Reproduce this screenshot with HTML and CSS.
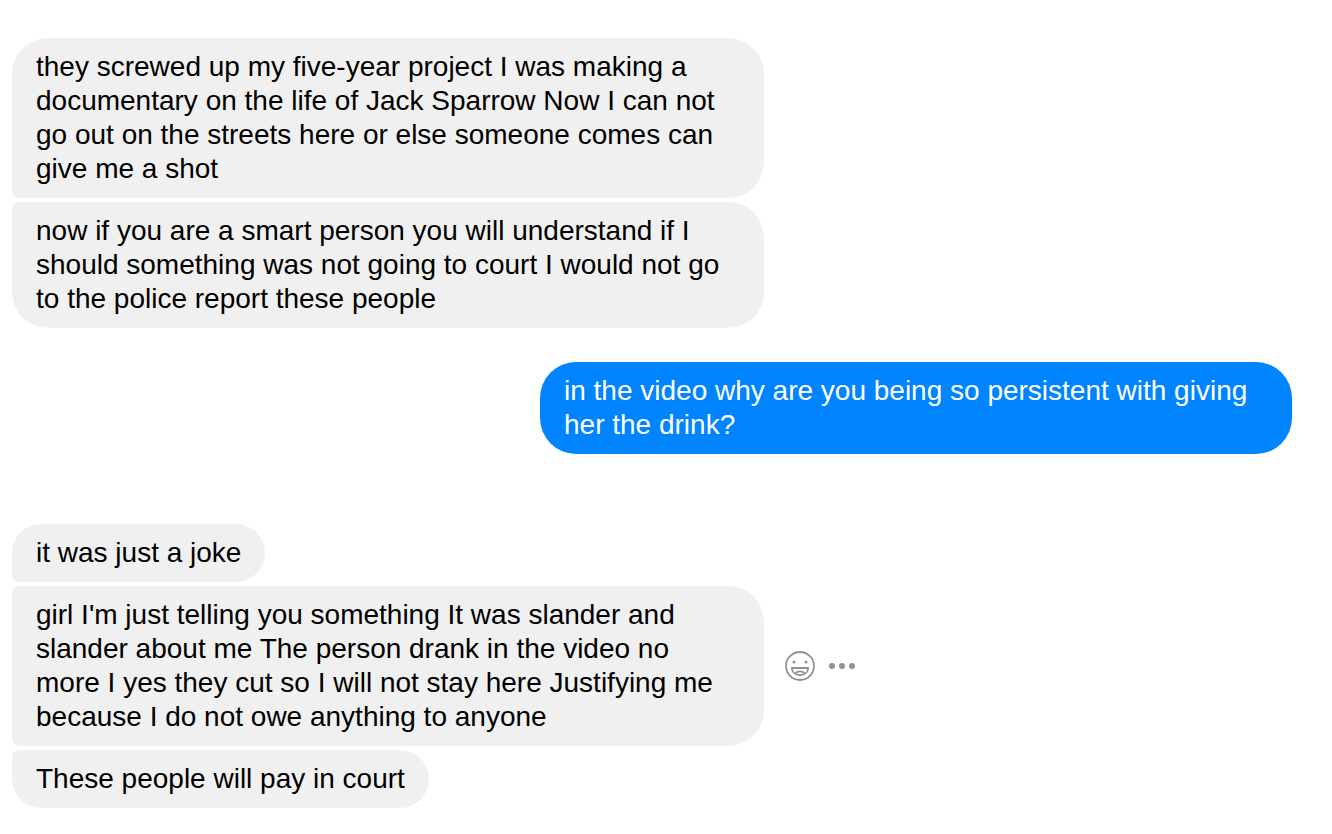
FILE: index.html
```html
<!DOCTYPE html>
<html lang="en">
<head>
  <meta charset="UTF-8" />
  <meta name="viewport" content="width=device-width, initial-scale=1.0" />
  <title>Messages</title>
  <link rel="stylesheet" href="styles.css">
</head>
<body>
  <main class="thread">
    <section class="group received">
      <div class="message">
        <p class="bubble">they screwed up my five-year project I was making a documentary on the life of Jack Sparrow Now I can not go out on the streets here or else someone comes can give me a shot</p>
      </div>
      <div class="message">
        <p class="bubble">now if you are a smart person you will understand if I should something was not going to court I would not go to the police report these people</p>
      </div>
    </section>

    <section class="group sent">
      <div class="message">
        <p class="bubble">in the video why are you being so persistent with giving her the drink?</p>
      </div>
    </section>

    <section class="group received">
      <div class="message">
        <p class="bubble">it was just a joke</p>
      </div>
      <div class="message">
        <p class="bubble">girl I'm just telling you something It was slander and slander about me The person drank in the video no more I yes they cut so I will not stay here Justifying me because I do not owe anything to anyone</p>
        <div class="actions">
          <button type="button" aria-label="React">
            <svg width="32" height="32" viewBox="0 0 32 32" fill="none" stroke="currentColor" stroke-width="1.8">
              <circle cx="16" cy="16" r="14" />
              <circle cx="10" cy="12" r="1.5" fill="currentColor" stroke="none" />
              <circle cx="22" cy="12" r="1.5" fill="currentColor" stroke="none" />
              <path d="M7.800 18h16.400c-.2 4.300-3.500 7-8.200 7s-8-2.700-8.200-7z" stroke-linejoin="round" />
              <path d="M11.500 23.500c.7-1.400 2.300-2.100 4.500-2.100s3.800.7 4.500 2.100" stroke-width="1.600" />
            </svg>
          </button>
          <button type="button" aria-label="More">
            <svg width="28" height="32" viewBox="0 0 28 32" fill="currentColor">
              <circle cx="4" cy="16" r="3" />
              <circle cx="14" cy="16" r="3" />
              <circle cx="24" cy="16" r="3" />
            </svg>
          </button>
        </div>
      </div>
      <div class="message">
        <p class="bubble">These people will pay in court</p>
      </div>
    </section>
  </main>
</body>
</html>
```
FILE: styles.css
```css
body {
  margin: 0;
  background-color: #fff;
  color: #000;
  font-family: "Helvetica Neue", "Liberation Sans", Arial, sans-serif;
  font-size: 28px;
  line-height: 34px;
}

.thread {
  padding: 38px 40px 26px 12px;
}

.group {
  display: flex;
  flex-direction: column;
  gap: 4px;
}

.sent {
  margin: 34px 0 70px;
}

.message {
  display: flex;
  align-items: center;
  gap: 20px;
}

.sent .message {
  justify-content: flex-end;
}

.bubble {
  box-sizing: border-box;
  max-width: 752px;
  margin: 0;
  padding: 12px 24px;
  border-radius: 36px;
}

.received .bubble {
  background-color: #f0f0f0;
  border-radius: 8px 36px 36px 8px;
}

.received .message:first-child .bubble {
  border-top-left-radius: 36px;
}

.received .message:last-child .bubble {
  border-bottom-left-radius: 36px;
}

.sent .bubble {
  background-color: #0084ff;
  color: #fff;
}

.actions {
  display: flex;
  gap: 12px;
}

.actions button {
  display: flex;
  padding: 0;
  border: none;
  background: none;
  color: #8d9199;
  cursor: pointer;
}
```
